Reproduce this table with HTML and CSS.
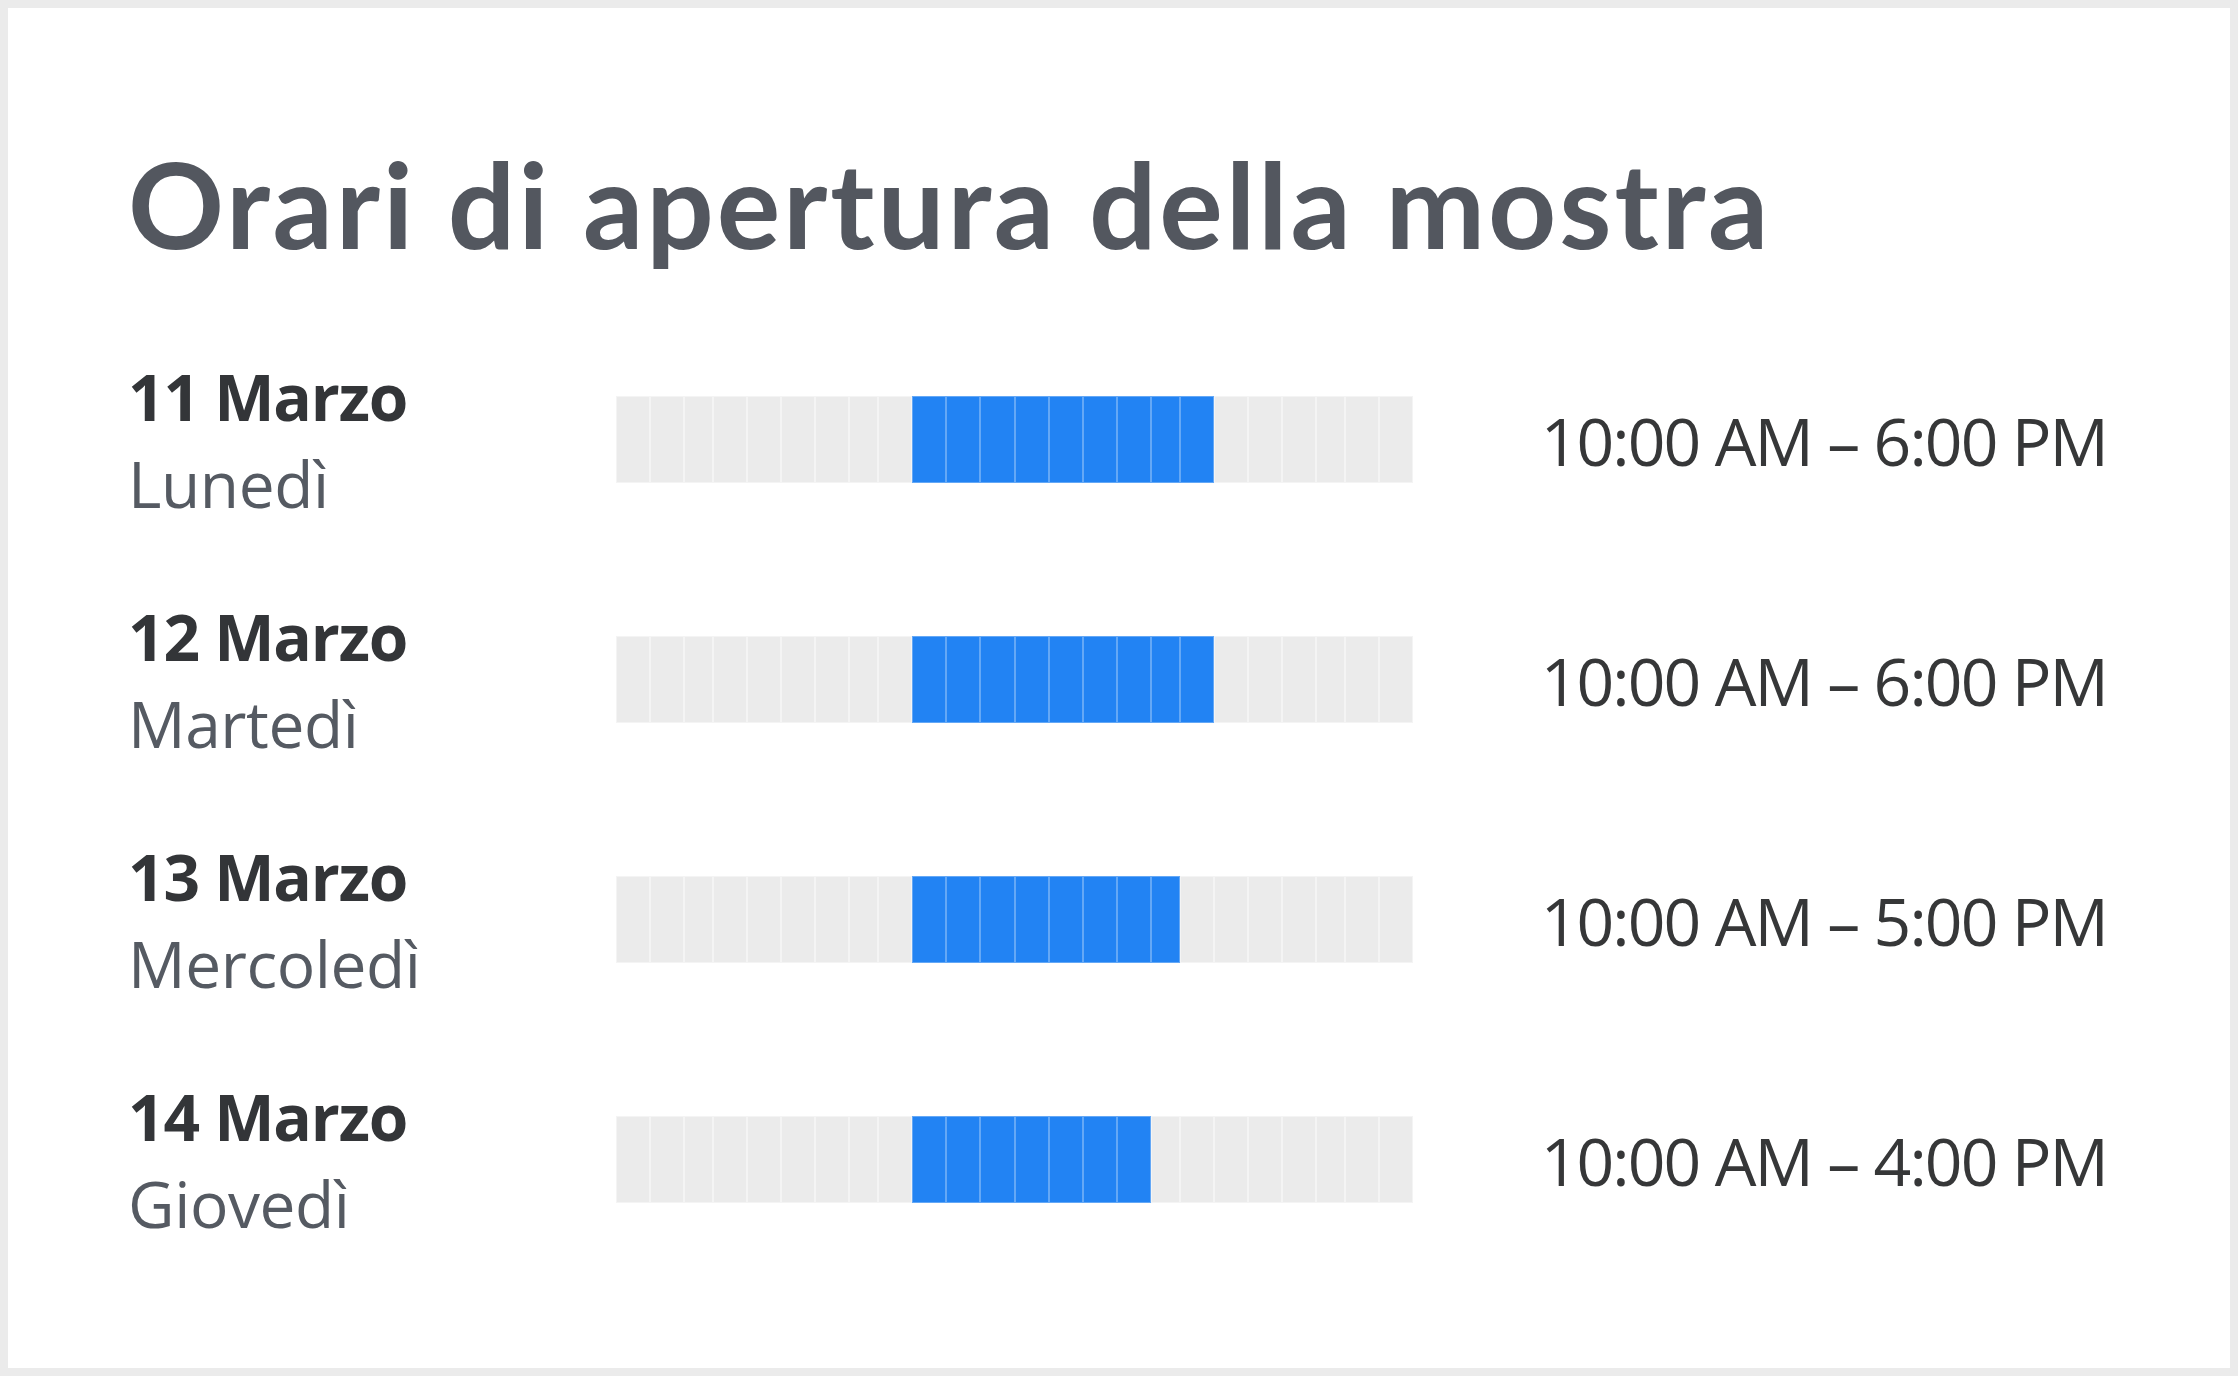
FILE: index.html
```html
<!DOCTYPE html>
<html lang="it">
<head>
<meta charset="utf-8">
<title>Orari di apertura della mostra</title>
<link rel="stylesheet" href="styles.css">
</head>
<body>
<div class="card">
  <h1 class="title">Orari di apertura della mostra</h1>
  <div class="rows">
    <div class="row">
      <div class="label"><div class="date">11 Marzo</div><div class="day">Lunedì</div></div>
      <div class="bar">
        <span class="cell"></span><span class="cell"></span><span class="cell narrow"></span><span class="cell"></span><span class="cell"></span><span class="cell"></span><span class="cell"></span><span class="cell narrow"></span><span class="cell"></span><span class="cell on"></span><span class="cell on"></span><span class="cell on"></span><span class="cell on"></span><span class="cell on"></span><span class="cell on"></span><span class="cell on"></span><span class="cell on narrow"></span><span class="cell on"></span><span class="cell"></span><span class="cell"></span><span class="cell"></span><span class="cell narrow"></span><span class="cell"></span><span class="cell"></span>
      </div>
      <div class="time">10:00 AM – 6:00 PM</div>
    </div>
    <div class="row">
      <div class="label"><div class="date">12 Marzo</div><div class="day">Martedì</div></div>
      <div class="bar">
        <span class="cell"></span><span class="cell"></span><span class="cell narrow"></span><span class="cell"></span><span class="cell"></span><span class="cell"></span><span class="cell"></span><span class="cell narrow"></span><span class="cell"></span><span class="cell on"></span><span class="cell on"></span><span class="cell on"></span><span class="cell on"></span><span class="cell on"></span><span class="cell on"></span><span class="cell on"></span><span class="cell on narrow"></span><span class="cell on"></span><span class="cell"></span><span class="cell"></span><span class="cell"></span><span class="cell narrow"></span><span class="cell"></span><span class="cell"></span>
      </div>
      <div class="time">10:00 AM – 6:00 PM</div>
    </div>
    <div class="row">
      <div class="label"><div class="date">13 Marzo</div><div class="day">Mercoledì</div></div>
      <div class="bar">
        <span class="cell"></span><span class="cell"></span><span class="cell narrow"></span><span class="cell"></span><span class="cell"></span><span class="cell"></span><span class="cell"></span><span class="cell narrow"></span><span class="cell"></span><span class="cell on"></span><span class="cell on"></span><span class="cell on"></span><span class="cell on"></span><span class="cell on"></span><span class="cell on"></span><span class="cell on"></span><span class="cell on narrow"></span><span class="cell"></span><span class="cell"></span><span class="cell"></span><span class="cell"></span><span class="cell narrow"></span><span class="cell"></span><span class="cell"></span>
      </div>
      <div class="time">10:00 AM – 5:00 PM</div>
    </div>
    <div class="row">
      <div class="label"><div class="date">14 Marzo</div><div class="day">Giovedì</div></div>
      <div class="bar">
        <span class="cell"></span><span class="cell"></span><span class="cell narrow"></span><span class="cell"></span><span class="cell"></span><span class="cell"></span><span class="cell"></span><span class="cell narrow"></span><span class="cell"></span><span class="cell on"></span><span class="cell on"></span><span class="cell on"></span><span class="cell on"></span><span class="cell on"></span><span class="cell on"></span><span class="cell on"></span><span class="cell narrow"></span><span class="cell"></span><span class="cell"></span><span class="cell"></span><span class="cell"></span><span class="cell narrow"></span><span class="cell"></span><span class="cell"></span>
      </div>
      <div class="time">10:00 AM – 4:00 PM</div>
    </div>
  </div>
</div>
</body>
</html>
```

FILE: styles.css
```css
html, body {
  height: 100%;
}
body {
  margin: 8px;
  background: #ebebeb;
  box-sizing: border-box;
}
.card {
  background: #ffffff;
  height: calc(100vh - 16px);
  box-sizing: border-box;
  padding: 124px 123px 0 120px;
}
.title {
  margin: 0;
  font-family: Lato, "Noto Sans", sans-serif;
  font-weight: 700;
  font-size: 119px;
  line-height: 1.2;
  color: #53575f;
  letter-spacing: 2.85px;
}
.rows {
  margin-top: 78px;
  display: flex;
  flex-direction: column;
  gap: 66px;
}
.row {
  display: grid;
  grid-template-columns: 488px 797px 1fr;
  align-items: center;
}
.label {
  font-family: "Open Sans", "Noto Sans", sans-serif;
  font-size: 64px;
  line-height: 87px;
}
.date {
  font-weight: 700;
  color: #333538;
  letter-spacing: -1.2px;
}
.day {
  font-weight: 400;
  color: #555a62;
  letter-spacing: -0.4px;
}
.bar {
  display: flex;
  height: 87px;
}
.cell {
  flex: 6 1 0;
  background: #ebebeb;
  box-shadow: inset 0 0 0 1px rgba(255, 255, 255, 0.45);
}
.cell.narrow {
  flex-grow: 5;
}
.cell.on {
  background: #2283f3;
  box-shadow: inset 0 0 0 1px rgba(255, 255, 255, 0.3);
}
.time {
  text-align: right;
  font-family: "Open Sans", "Noto Sans", sans-serif;
  font-size: 66px;
  letter-spacing: -1.9px;
  color: #363738;
  white-space: nowrap;
}
```
